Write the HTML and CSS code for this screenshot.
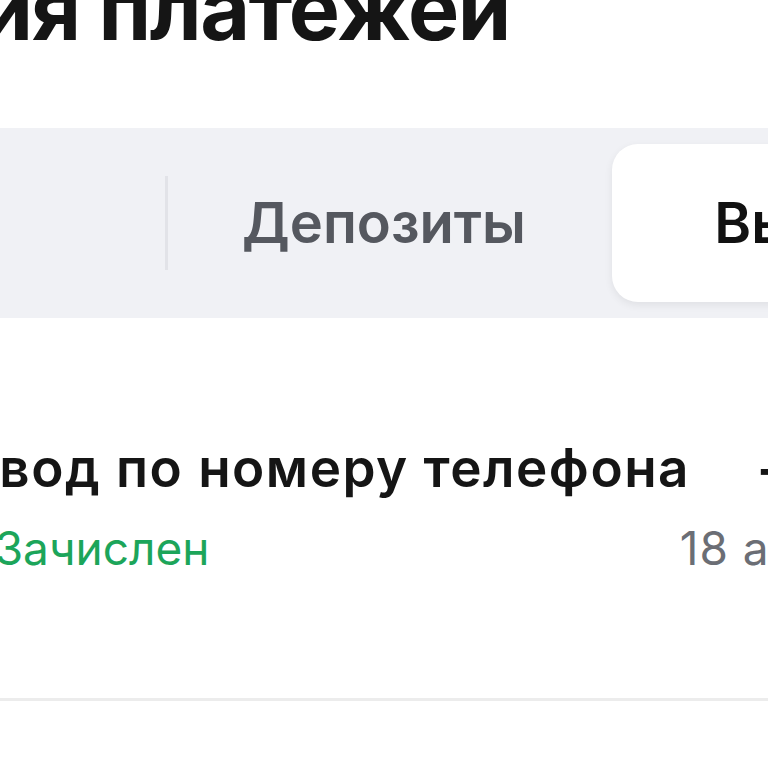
FILE: index.html
```html
<!DOCTYPE html>
<html lang="ru">
<head>
    <meta charset="UTF-8">
    <meta name="viewport" content="width=device-width, initial-scale=1.0">
    <title>История платежей</title>
    <link rel="stylesheet" href="styles.css">
</head>
<body>

<div class="screen">
    <h1 class="page-title">История платежей</h1>

    <div class="segmented">
        <button class="seg-tab">Все</button>
        <span class="seg-divider"></span>
        <button class="seg-tab">Депозиты</button>
        <button class="seg-tab active">Выводы</button>
    </div>

    <div class="tx-list">
        <div class="tx-row">
            <div class="tx-icon"></div>
            <div class="tx-body">
                <div class="tx-line">
                    <span class="tx-name">Перевод по номеру телефона</span>
                    <span class="tx-amount">−5000 ₽</span>
                </div>
                <div class="tx-line">
                    <span class="tx-status"><span class="tx-method">СБП · </span>Зачислен</span>
                    <span class="tx-date">18 апр., 12:45</span>
                </div>
            </div>
        </div>
    </div>
</div>

</body>
</html>
```

FILE: styles.css
```css
body { margin: 0; background: #fff; color: #151515; font-family: Inter, "Noto Sans", sans-serif; overflow: hidden; }
.screen { width: 1364px; margin-left: -340px; }

.page-title { margin: -34px 0 0; padding-left: 62px; font-size: 86px; font-weight: 700; line-height: 1; letter-spacing: -1.5px; white-space: nowrap; }

.segmented {
    display: flex;
    align-items: center;
    margin: 76px 0 0 57px;
    padding: 16px;
    background: #f0f1f5;
}
.seg-tab {
    flex: 0 0 432px;
    height: 158px;
    border: none;
    border-radius: 26px;
    background: transparent;
    font-family: inherit;
    font-size: 56px;
    font-weight: 600;
    color: #55585f;
    white-space: nowrap;
}
.seg-tab.active { background: #fff; color: #111; box-shadow: 0 3px 8px rgba(0,0,0,0.07); margin-left: 12px; }
.seg-divider { flex: 0 0 3px; height: 94px; background: #e2e3e8; }

.tx-list { padding: 0 32px; }
.tx-row {
    display: flex;
    align-items: center;
    gap: 62px;
    padding: 121px 0 124px;
    border-bottom: 3px solid #ececec;
}
.tx-icon { flex: 0 0 104px; height: 104px; border-radius: 50%; background: #f0f1f5; }
.tx-body { flex: 1; display: flex; flex-direction: column; gap: 26px; }
.tx-line { display: flex; justify-content: space-between; white-space: nowrap; }
.tx-name, .tx-amount { font-size: 53px; font-weight: 600; line-height: 1.1; letter-spacing: 1.5px; }
.tx-status, .tx-date { font-size: 46px; line-height: 1.1; }
.tx-status { color: #1ca55a; }
.tx-method { color: #6b6e75; }
.tx-date { color: #6b6e75; letter-spacing: 1px; }
```
